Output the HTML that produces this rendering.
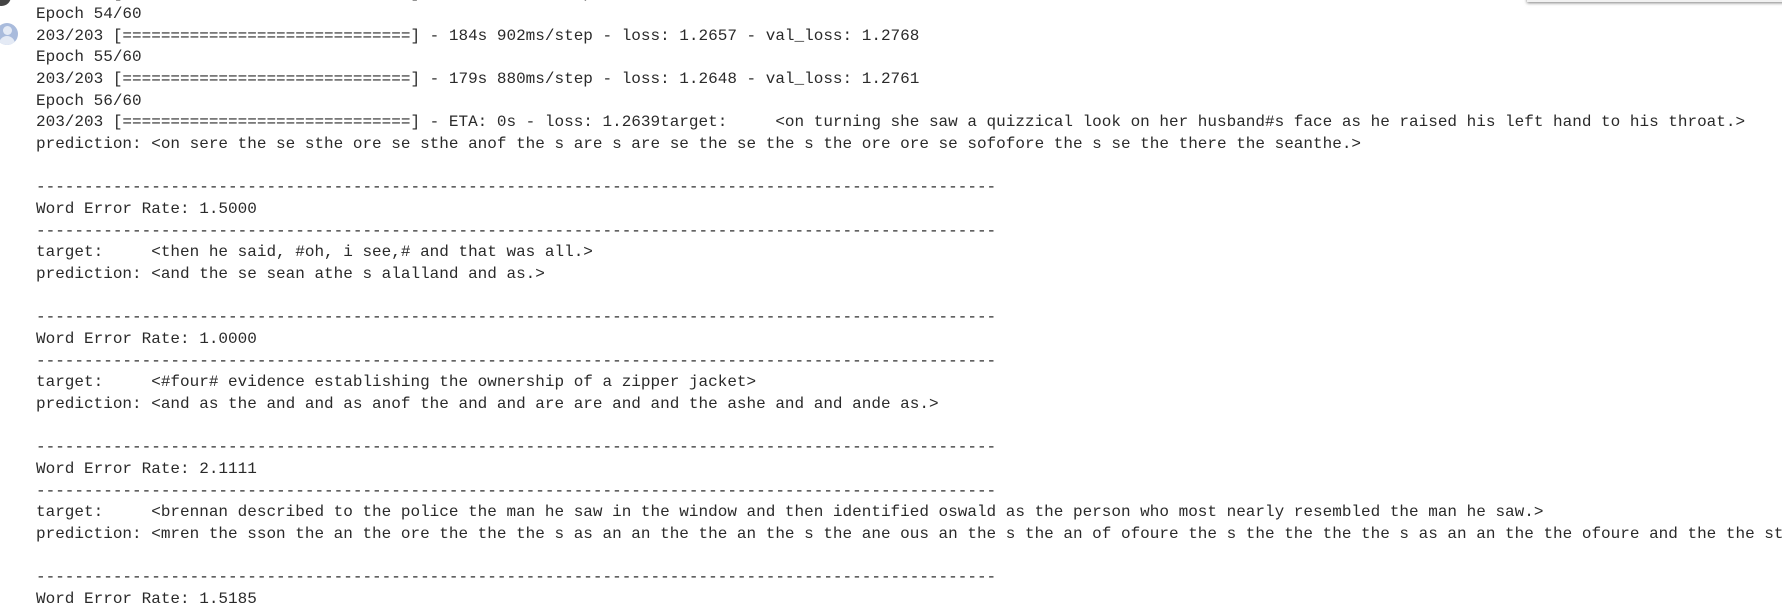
<!DOCTYPE html>
<html><head><meta charset="utf-8"><style>
html,body{margin:0;padding:0;background:#fff;width:1782px;height:616px;overflow:hidden;position:relative}
pre{position:absolute;left:36px;top:-17.5px;margin:0;font-family:"Liberation Mono",monospace;font-size:16px;line-height:21.66px;color:#2a2a2a;white-space:pre}
.av{position:absolute;left:-4px;top:23px;width:22px;height:22px;border-radius:50%;background:#a9bbdc;overflow:hidden}
.av:before{content:"";position:absolute;left:7px;top:3px;width:9px;height:9px;border-radius:50%;background:#e4eaf5}
.av:after{content:"";position:absolute;left:3px;top:13px;width:16px;height:11px;border-radius:8px 8px 0 0;background:#e4eaf5}
.dk{position:absolute;left:-8px;top:-13px;width:19px;height:19px;border-radius:50%;background:#444}
.box{position:absolute;left:1527px;top:-10px;width:270px;height:12px;background:#f1f1f1;box-shadow:0 1px 3px rgba(0,0,0,.5)}
</style></head><body>
<div class="dk"></div><div class="av"></div><div class="box"></div>
<pre>203/203 [==============================] - 181s 891ms/step - loss: 1.2668 - val_loss: 1.2775
Epoch 54/60
203/203 [==============================] - 184s 902ms/step - loss: 1.2657 - val_loss: 1.2768
Epoch 55/60
203/203 [==============================] - 179s 880ms/step - loss: 1.2648 - val_loss: 1.2761
Epoch 56/60
203/203 [==============================] - ETA: 0s - loss: 1.2639target:     &lt;on turning she saw a quizzical look on her husband#s face as he raised his left hand to his throat.&gt;
prediction: &lt;on sere the se sthe ore se sthe anof the s are s are se the se the s the ore ore se sofofore the s se the there the seanthe.&gt;

----------------------------------------------------------------------------------------------------
Word Error Rate: 1.5000
----------------------------------------------------------------------------------------------------
target:     &lt;then he said, #oh, i see,# and that was all.&gt;
prediction: &lt;and the se sean athe s alalland and as.&gt;

----------------------------------------------------------------------------------------------------
Word Error Rate: 1.0000
----------------------------------------------------------------------------------------------------
target:     &lt;#four# evidence establishing the ownership of a zipper jacket&gt;
prediction: &lt;and as the and and as anof the and and are are and and the ashe and and ande as.&gt;

----------------------------------------------------------------------------------------------------
Word Error Rate: 2.1111
----------------------------------------------------------------------------------------------------
target:     &lt;brennan described to the police the man he saw in the window and then identified oswald as the person who most nearly resembled the man he saw.&gt;
prediction: &lt;mren the sson the an the ore the the the s as an an the the an the s the ane ous an the s the an of ofoure the s the the the the s as an an the the ofoure and the the st

----------------------------------------------------------------------------------------------------
Word Error Rate: 1.5185
</pre>
</body></html>
